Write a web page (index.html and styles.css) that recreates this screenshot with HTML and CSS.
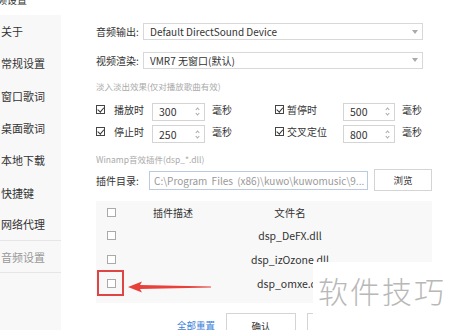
FILE: index.html
```html
<!DOCTYPE html>
<html>

<head>
    <link rel="stylesheet" href="styles.css">
</head>

<body>
    <div class="title">频设置</div>
    <div class="window">
        <ul class="nav">
            <li>关于</li>
            <li>常规设置</li>
            <li>窗口歌词</li>
            <li>桌面歌词</li>
            <li>本地下载</li>
            <li>快捷键</li>
            <li class="line">网络代理</li>
            <li class="line current">音频设置</li>
        </ul>
        <div class="main">
            <div class="field">
                <span class="label">音频输出:</span>
                <div class="select">Default DirectSound Device
                    <svg class="caret" width="6" height="4" viewBox="0 0 6 4"><path d="M0 0H6L3 4Z" fill="#aaa"/></svg>
                </div>
            </div>
            <div class="field">
                <span class="label">视频渲染:</span>
                <div class="select">VMR7 无窗口(默认)
                    <svg class="caret" width="6" height="4" viewBox="0 0 6 4"><path d="M0 0H6L3 4Z" fill="#aaa"/></svg>
                </div>
            </div>

            <p class="note">淡入淡出效果(仅对播放歌曲有效)</p>

            <div class="fades">
                <span class="check on"></span><span>播放时</span>
                <div class="spin">300<span class="arrows"></span></div><span class="unit">毫秒</span>
                <span class="check on"></span><span>暂停时</span>
                <div class="spin">500<span class="arrows"></span></div><span class="unit">毫秒</span>

                <span class="check on"></span><span>停止时</span>
                <div class="spin">250<span class="arrows"></span></div><span class="unit">毫秒</span>
                <span class="check on"></span><span>交叉定位</span>
                <div class="spin">800<span class="arrows"></span></div><span class="unit">毫秒</span>
            </div>

            <p class="note winamp">Winamp音效插件(dsp_*.dll)</p>

            <div class="dir">
                <span class="label">插件目录:</span>
                <div class="path">C:\Program Files (x86)\kuwo\kuwomusic\9...</div>
                <div class="btn browse">浏览</div>
            </div>

            <div class="plugins">
                <div class="row">
                    <span class="check"></span><span>插件描述</span><span class="file">文件名</span>
                </div>
                <div class="row">
                    <span class="check"></span><span></span><span class="file">dsp_DeFX.dll</span>
                </div>
                <div class="row">
                    <span class="check"></span><span></span><span class="file">dsp_izOzone.dll</span>
                </div>
                <div class="row">
                    <span class="check"></span><span></span><span class="file">dsp_omxe.dll</span>
                </div>
            </div>

            <div class="actions">
                <span class="reset">全部重置</span>
                <div class="btn">确认</div>
                <div class="btn"></div>
            </div>
        </div>
    </div>

    <!-- annotation on top of the screenshot -->
    <div class="mark"></div>
    <svg class="arrow" width="90" height="16" viewBox="0 0 90 16">
        <polygon points="2,8 16,2.5 14,6 85,7.5 85,8.6 14,10 16,13.5" fill="#e8403a"/>
    </svg>
    <div class="watermark">软件技巧</div>
</body>

</html>
```

FILE: styles.css
```css
body {
    margin: 0;
    width: 450px;
    height: 330px;
    overflow: hidden;
    position: relative;
    background: #fff;
    color: #333;
    font-family: "Noto Sans CJK SC", "Noto Sans", sans-serif;
    font-size: 10px;
}

.title {
    height: 15px;
    line-height: 10px;
    margin-top: -5px;
    margin-left: -3px;
    font-size: 10px;
}

.window {
    display: flex;
    height: 315px;
    margin-top: 5px;
}

.nav {
    list-style: none;
    margin: 0;
    padding: 0;
    width: 61px;
    background: #f8f8f8;
}

.nav li {
    box-sizing: border-box;
    height: 32.3px;
    display: flex;
    align-items: center;
    padding-left: 1px;
    font-size: 11px;
}

.nav .line {
    border-bottom: 1px solid #e6e6e6;
}

.nav .current {
    color: #999;
}

.main {
    flex: 1;
    padding-left: 35px;
    padding-top: 8px;
}

.field {
    display: flex;
    align-items: center;
    height: 17px;
    margin-bottom: 11.5px;
}

.label {
    width: 47px;
    flex-shrink: 0;
}

.select {
    box-sizing: border-box;
    width: 280px;
    height: 17px;
    border: 1px solid #d8d8d8;
    padding-left: 6px;
    display: flex;
    align-items: center;
    justify-content: space-between;
    padding-right: 4px;
}

.note {
    margin: 0;
    color: #aaa;
    font-size: 8.5px;
    line-height: 12px;
    margin-top: 2px;
}

.winamp {
    margin-top: 9.5px;
}

.fades {
    display: grid;
    grid-template-columns: 18px 38px 53px 70px 12px 56px 52px auto;
    grid-auto-rows: 22.5px;
    align-items: center;
    margin-top: 6px;
}

.check {
    box-sizing: border-box;
    width: 9px;
    height: 9px;
    border: 1px solid #aaa;
    background: #fff;
    display: inline-block;
    position: relative;
}

.check.on {
    border-color: #444;
}

.check.on::after {
    content: "";
    position: absolute;
    left: 1.5px;
    top: 0;
    width: 2.5px;
    height: 4.5px;
    border: solid #333;
    border-width: 0 1.2px 1.2px 0;
    transform: rotate(40deg);
}

.spin {
    box-sizing: border-box;
    height: 18px;
    border: 1px solid #d4d4d4;
    padding-left: 6px;
    font-size: 10.5px;
    display: flex;
    align-items: center;
    justify-content: space-between;
    margin-top: 5px;
}

.arrows {
    width: 5px;
    height: 9px;
    margin-right: 4px;
    position: relative;
}

.arrows::before,
.arrows::after {
    content: "";
    position: absolute;
    left: 1px;
    width: 2px;
    height: 2px;
    border: solid #aaa;
    border-width: 1px 0 0 1px;
}

.arrows::before {
    top: 1px;
    transform: rotate(45deg);
}

.arrows::after {
    bottom: 1px;
    transform: rotate(225deg);
}

.unit {
    padding-left: 7px;
}

.dir {
    display: flex;
    align-items: center;
    margin-top: 4.5px;
}

.dir .label {
    width: 53px;
}

.path {
    box-sizing: border-box;
    width: 219px;
    height: 19px;
    border: 1px solid #b9cbdc;
    color: #999;
    padding-left: 4px;
    line-height: 17px;
    word-spacing: 2px;
    white-space: nowrap;
    overflow: hidden;
}

.btn {
    box-sizing: border-box;
    width: 70px;
    height: 26px;
    border: 1px solid #d4d4d4;
    background: #fff;
    display: flex;
    align-items: center;
    justify-content: center;
    font-size: 9.5px;
}

.browse {
    width: 58px;
    height: 22px;
    margin-left: 6px;
}

.plugins {
    width: 336px;
    margin-top: 9.5px;
    padding-bottom: 8px;
    background: #f8f8f8;
}

.row {
    display: grid;
    grid-template-columns: 57px 77px 120px;
    height: 23.6px;
    align-items: center;
}

.row .check {
    margin-left: 11px;
}

.file {
    text-align: center;
    font-size: 10.5px;
}

.actions {
    display: flex;
    align-items: center;
    gap: 11px;
    margin-top: 10px;
    padding-left: 81px;
}

.reset {
    color: #3d7fd9;
    font-size: 9.5px;
    margin-top: -2px;
}

.mark {
    position: absolute;
    left: 97px;
    top: 270px;
    width: 27px;
    height: 26px;
    box-sizing: border-box;
    border: 2px solid #e04545;
}

.arrow {
    position: absolute;
    left: 126px;
    top: 279px;
}

.watermark {
    position: absolute;
    left: 313px;
    top: 262px;
    width: 137px;
    height: 68px;
    background: #fff;
    color: #b8b8b8;
    font-size: 30px;
    font-weight: 300;
    letter-spacing: 2px;
    line-height: 40px;
    padding-left: 5px;
    padding-top: 8px;
    box-sizing: border-box;
    white-space: nowrap;
}
```
